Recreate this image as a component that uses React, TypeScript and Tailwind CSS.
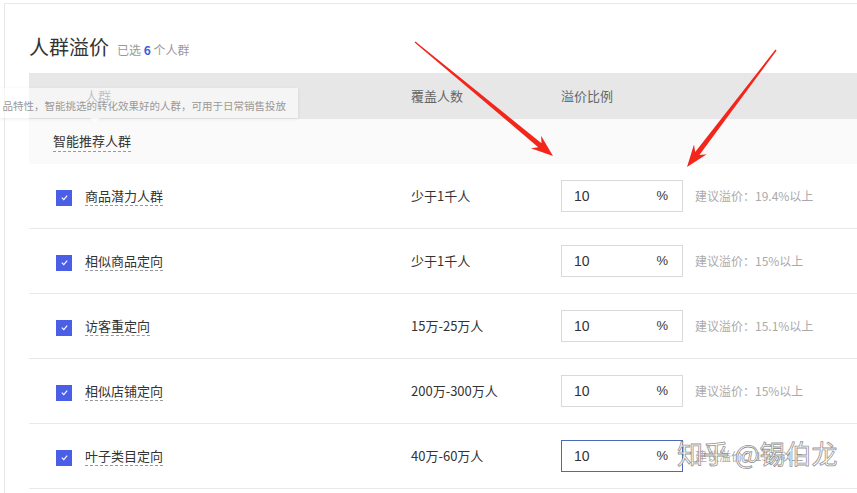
import React from 'react';

type Row = { name: string; count: string; value: string; hint: string; focused?: boolean };

const rows: Row[] = [
  { name: '商品潜力人群', count: '少于1千人', value: '10', hint: '建议溢价：19.4%以上' },
  { name: '相似商品定向', count: '少于1千人', value: '10', hint: '建议溢价：15%以上' },
  { name: '访客重定向', count: '15万-25万人', value: '10', hint: '建议溢价：15.1%以上' },
  { name: '相似店铺定向', count: '200万-300万人', value: '10', hint: '建议溢价：15%以上' },
  { name: '叶子类目定向', count: '40万-60万人', value: '10', hint: '建议溢价：15%以上', focused: true },
];

const font = { fontFamily: '"Noto Sans CJK SC", "Liberation Sans", sans-serif' };

// tapered red arrow, from (x1,y1) to tip (x2,y2)
function arrowPoints(x1: number, y1: number, x2: number, y2: number) {
  const dx = x2 - x1;
  const dy = y2 - y1;
  const len = Math.hypot(dx, dy);
  const ux = dx / len;
  const uy = dy / len;
  const nx = -uy;
  const ny = ux;
  const head = 22;
  const bx = x2 - ux * head;
  const by = y2 - uy * head;
  const nb = bx + ux * 5;
  const nby = by + uy * 5;
  const p = (x: number, y: number) => `${x.toFixed(1)},${y.toFixed(1)}`;
  return [
    p(x1 + nx * 0.7, y1 + ny * 0.7),
    p(nb + nx * 2.6, nby + ny * 2.6),
    p(bx + nx * 8, by + ny * 8),
    p(x2, y2),
    p(bx - nx * 8, by - ny * 8),
    p(nb - nx * 2.6, nby - ny * 2.6),
    p(x1 - nx * 0.7, y1 - ny * 0.7),
  ].join(' ');
}

function Check() {
  return (
    <span className="mt-[3px] flex h-4 w-4 shrink-0 items-center justify-center bg-[#4a5fe6]">
      <svg width="9" height="9" viewBox="0 0 10 10" fill="none">
        <path d="M2 5.2 L4.2 7.3 L8 3" stroke="white" strokeWidth="1.3" />
      </svg>
    </span>
  );
}

const App: React.FC = () => {
  return (
    <div className="relative h-[493px] w-[857px] overflow-hidden bg-white text-[#333]" style={font}>
      <div className="ml-[4px] mt-[3px] h-[490px] border-l border-t border-[#e8e8e8] pl-[24px]">
        <div className="flex items-baseline pt-[29px]">
          <span className="text-[20px] leading-[28px] text-[#333]">人群溢价</span>
          <span className="ml-[8px] text-[12px] text-[#999]">
            已选 <span className="font-semibold text-[#3d5bd9]">6</span> 个人群
          </span>
        </div>

        <div className="mt-[12px]">
          <div className="flex h-[46px] items-center bg-[#e7e7e7] text-[13px] text-[#666]">
            <div className="w-[382px] pl-[56px]">人群</div>
            <div className="w-[150px]">覆盖人数</div>
            <div>溢价比例</div>
          </div>
          <div className="flex h-[45px] items-center bg-[#fafafa] pl-[24px] text-[13px]">
            <span className="border-b border-dashed border-[#999] leading-[20px]">智能推荐人群</span>
          </div>
          {rows.map((r) => (
            <div key={r.name} className="flex h-[65px] items-center border-b border-[#e8e8e8] text-[13px]">
              <div className="flex w-[382px] items-center pl-[27px]">
                <Check />
                <span className="ml-[13px] border-b border-dashed border-[#999] leading-[19px]">{r.name}</span>
              </div>
              <div className="w-[150px]">{r.count}</div>
              <div
                className={`flex h-[32px] w-[122px] items-center justify-between border pl-[12px] pr-[14px] ${
                  r.focused ? 'border-[#4d69b8]' : 'border-[#d9d9d9]'
                }`}
              >
                <span className="font-['Liberation_Sans'] text-[14px]">{r.value}</span>
                <span className="font-['Liberation_Sans'] text-[13px]">%</span>
              </div>
              <div className="ml-[12px] text-[12px] text-[#aaa]">{r.hint}</div>
            </div>
          ))}
        </div>
      </div>

      {/* tooltip */}
      <div className="absolute left-0 top-[88px] h-[30px] w-[298px] bg-white/60 shadow-[0_1px_4px_rgba(0,0,0,0.08)]">
        <div className="flex h-full items-center justify-end overflow-hidden whitespace-nowrap pr-[12px] pt-[5px] text-[10.5px] text-[#999]">
          品特性，智能挑选的转化效果好的人群，可用于日常销售投放
        </div>
        <div className="absolute left-[90px] top-[30px] h-0 w-0 border-x-[5px] border-t-[5px] border-x-transparent border-t-white/70" />
      </div>

      {/* red arrows */}
      <svg className="pointer-events-none absolute left-0 top-0" width="857" height="493">
        <polygon points={arrowPoints(415, 42, 553, 156)} fill="#f2261b" />
        <polygon points={arrowPoints(776, 50, 687, 167)} fill="#f2261b" />
      </svg>

      {/* watermark */}
      <div className="pointer-events-none absolute left-[677px] top-[437px] text-[26px] leading-[32px] text-white/85 [-webkit-text-stroke:0.8px_rgba(110,110,110,0.75)]">
        知乎 @锡伯龙
      </div>
    </div>
  );
};

export default App;
